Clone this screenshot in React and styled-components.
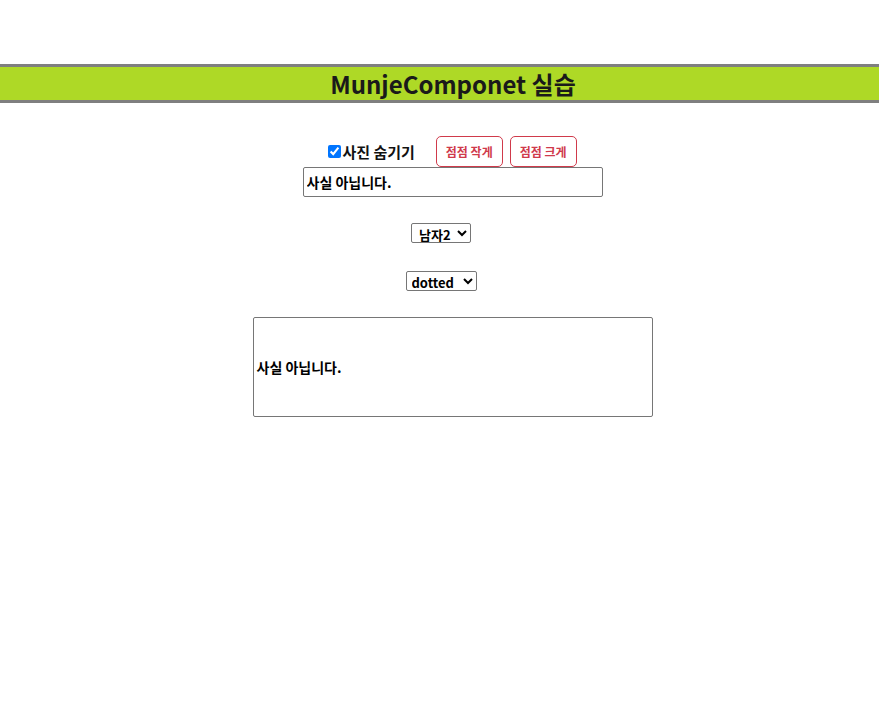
import React, { useState } from "react";
import styled, { createGlobalStyle } from "styled-components";

const GlobalStyle = createGlobalStyle`
  body {
    margin: 0;
    background: #fff;
    font-family: "Noto Sans CJK KR", "Noto Sans", sans-serif;
    font-weight: 700;
    color: #111;
  }
`;

const Header = styled.h1`
  margin: 64px 0 0;
  height: 33px;
  border-top: 3px solid #7f7f7f;
  border-bottom: 3px solid #7f7f7f;
  background: #aed926;
  display: flex;
  align-items: center;
  justify-content: center;
  padding-left: 27px;
  font-size: 24px;
  font-weight: 700;
  color: #1a1a1a;
`;

const Main = styled.main`
  display: flex;
  flex-direction: column;
  align-items: center;
  padding-top: 33px;
`;

const Row = styled.div`
  display: flex;
  align-items: center;
  padding-left: ${(p) => p.$shift || 0}px;
  margin-top: ${(p) => p.$top || 0}px;
`;

const CheckLabel = styled.label`
  display: flex;
  align-items: center;
  font-size: 15px;
  margin-right: 21px;
  input {
    margin: 0 1px 0 0;
    width: 13px;
    height: 13px;
  }
`;

const Button = styled.button`
  height: 31px;
  padding: 0 9px;
  margin-left: ${(p) => p.$gap || 0}px;
  border: 1px solid #d03a4b;
  border-radius: 5px;
  background: #fff;
  color: #d03a4b;
  font-family: inherit;
  font-weight: 700;
  font-size: 12px;
`;

const TextInput = styled.input`
  box-sizing: border-box;
  width: 300px;
  height: 30px;
  border: 1px solid #767676;
  border-radius: 2px;
  padding: 0 3px;
  font-family: inherit;
  font-weight: 700;
  font-size: 14px;
  color: #000;
`;

const Select = styled.select`
  height: 20px;
  font-family: inherit;
  font-weight: 700;
  font-size: 13px;
  border: 1px solid #767676;
  border-radius: 2px;
  padding: 0 ${(p) => p.$pad || 1}px;
  background: #fff;
  color: #000;
`;

const Box = styled.div`
  box-sizing: border-box;
  width: 400px;
  height: 100px;
  border: 1px solid #767676;
  border-radius: 2px;
  display: flex;
  align-items: center;
  padding-left: 3px;
  font-size: 14px;
  color: #000;
`;

export default function App() {
  const [hide, setHide] = useState(true);
  const [text, setText] = useState("사실 아닙니다.");
  return (
    <>
      <GlobalStyle />
      <Header>MunjeComponet 실습</Header>
      <Main>
        <Row $shift={26}>
          <CheckLabel>
            <input type="checkbox" checked={hide} onChange={(e) => setHide(e.target.checked)} />
            사진 숨기기
          </CheckLabel>
          <Button>점점 작게</Button>
          <Button $gap={7}>점점 크게</Button>
        </Row>
        <Row $shift={26}>
          <TextInput value={text} onChange={(e) => setText(e.target.value)} />
        </Row>
        <Row $top={26} $shift={3}>
          <Select defaultValue="m2" $pad={3}>
            <option value="m1">남자1</option>
            <option value="m2">남자2</option>
          </Select>
        </Row>
        <Row $top={28} $shift={3}>
          <Select defaultValue="dotted">
            <option value="solid">solid</option>
            <option value="dotted">dotted</option>
            <option value="dashed">dashed</option>
          </Select>
        </Row>
        <Row $top={26} $shift={26}>
          <Box>{text}</Box>
        </Row>
      </Main>
    </>
  );
}
